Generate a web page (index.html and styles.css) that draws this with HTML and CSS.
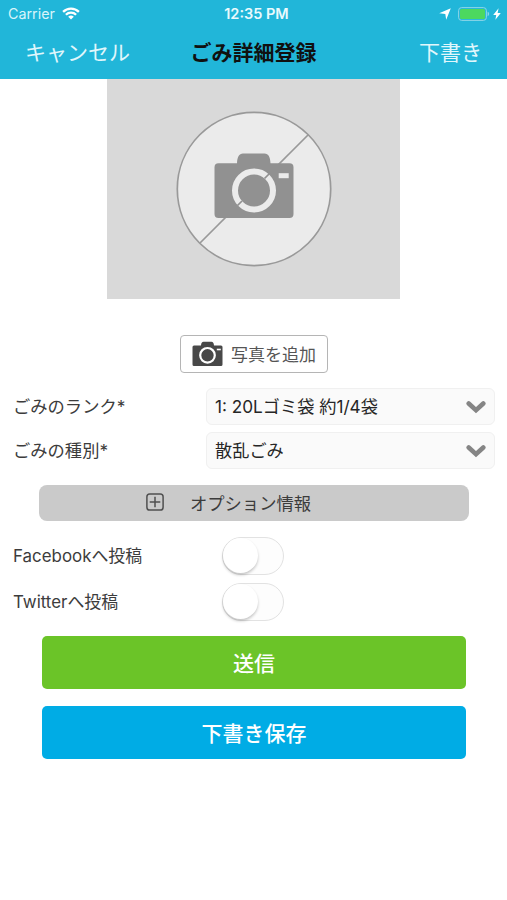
FILE: index.html
```html
<!doctype html>
<html lang="ja">
<head>
    <meta charset="utf-8">
    <meta name="viewport" content="width=device-width, initial-scale=1">
    <title>ごみ詳細登録</title>
    <link rel="stylesheet" href="styles.css">
</head>
<body>
    <header class="header">
        <div class="status">
            <div class="status-left">
                <span class="carrier">Carrier</span>
                <svg class="wifi" width="18" height="13" viewBox="0 0 18 13" fill="none" stroke="#fff" stroke-width="2.3">
                    <path d="M1.1 4.9a11.2 11.2 0 0 1 15.8 0M3.9 7.8a7.2 7.2 0 0 1 10.2 0"/>
                    <path d="M9 12.6L6.2 9.8a4 4 0 0 1 5.6 0z" fill="#fff" stroke="none"/>
                </svg>
            </div>
            <span class="time">12:35 PM</span>
            <div class="status-right">
                <svg width="12" height="12" viewBox="0 0 12 12"><path d="M11.8.2L7.2 11.7 6.3 5.9.2 5.2z" fill="#fff"/></svg>
                <svg class="battery" width="32" height="14" viewBox="0 0 32 14">
                    <rect x=".6" y=".6" width="27.8" height="12.8" rx="3" fill="none" stroke="#8ed6e8"/>
                    <rect x="2" y="2" width="25" height="10" rx="1.5" fill="#4cd85f"/>
                    <path d="M29.6 4.8q1.6.6 1.6 2.2t-1.6 2.2z" fill="#8ed6e8"/>
                </svg>
                <svg width="8" height="12" viewBox="0 0 8 12"><path d="M5.6.2L.2 6.9h3L2.4 11.8 7.8 5H4.6z" fill="#fff"/></svg>
            </div>
        </div>
        <nav class="nav">
            <a class="nav-link">キャンセル</a>
            <h1>ごみ詳細登録</h1>
            <a class="nav-link nav-right">下書き</a>
        </nav>
    </header>
    <main>
        <div class="photo">
            <svg width="156" height="156" viewBox="0 0 156 156">
                <circle cx="78" cy="78" r="76.7" fill="#ebebeb" stroke="#999" stroke-width="1.7"/>
                <path d="M24 132L132 24" stroke="#999" stroke-width="1.7"/>
                <path d="M42.5 52.3H61C61.3 46 63 42.5 67 42.5H88.5C92.5 42.5 94.2 46 94.5 52.3H113.5a4 4 0 0 1 4 4V103a4 4 0 0 1-4 4H42.5a4 4 0 0 1-4-4V56.3a4 4 0 0 1 4-4z" fill="#919191"/>
                <circle cx="78" cy="79.5" r="19" fill="none" stroke="#ebebeb" stroke-width="6"/>
                <path d="M61.5 94.5l4.5-4.5M88.5 67.5l4.5-4.5" stroke="#919191" stroke-width="1.7"/>
                <rect x="102.7" y="62.2" width="10" height="5" fill="#ebebeb"/>
            </svg>
        </div>
        <button class="add-photo" type="button">
            <svg width="31" height="26" viewBox="0 0 31 26">
                <path d="M2 4.5H9C9.2 1.8 10 .7 11.5.7H19.5C21 .7 21.8 1.8 22 4.5H29A1.5 1.5 0 0 1 30.5 6V23.5A1.5 1.5 0 0 1 29 25H2A1.5 1.5 0 0 1 .5 23.5V6A1.5 1.5 0 0 1 2 4.5z" fill="#484848"/>
                <circle cx="15.5" cy="14.3" r="7.3" fill="none" stroke="#fff" stroke-width="2.2"/>
                <path d="M24.8 8.5h4" stroke="#fff" stroke-width="1.6"/>
            </svg>
            <span class="text">写真を追加</span>
        </button>
        <form class="form">
            <div class="field">
                <label class="text">ごみのランク*</label>
                <div class="select">
                    <span class="text value">1: 20Lゴミ袋 約1/4袋</span>
                    <svg class="chevron" width="20" height="14" viewBox="0 0 20 14"><path d="M2.7 3.5l7.3 6.7 7.3-6.7"/></svg>
                </div>
            </div>
            <div class="field">
                <label class="text">ごみの種別*</label>
                <div class="select">
                    <span class="text value">散乱ごみ</span>
                    <svg class="chevron" width="20" height="14" viewBox="0 0 20 14"><path d="M2.7 3.5l7.3 6.7 7.3-6.7"/></svg>
                </div>
            </div>
            <button class="option" type="button">
                <svg class="plus" width="18" height="18" viewBox="0 0 18 18">
                    <rect x=".9" y=".9" width="16.2" height="16.2" rx="2.8"/>
                    <path d="M9 3.7v10.6M3.7 9h10.6"/>
                </svg>
                <span class="text">オプション情報</span>
            </button>
            <div class="share">
                <label class="text">Facebookへ投稿</label>
                <span class="toggle"></span>
            </div>
            <div class="share">
                <label class="text">Twitterへ投稿</label>
                <span class="toggle"></span>
            </div>
            <button class="submit" type="button">送信</button>
            <button class="submit draft" type="button">下書き保存</button>
        </form>
    </main>
</body>
</html>
```
FILE: styles.css
```css
* {
    box-sizing: border-box;
}
body {
    margin: 0;
    background: #fff;
    color: #3c3c3c;
    font-family: Inter, "Noto Sans CJK JP", sans-serif;
    font-size: 17px;
}
button {
    display: flex;
    align-items: center;
    padding: 0;
    font: inherit;
}
svg {
    display: block;
    flex-shrink: 0;
}
.text {
    padding-bottom: 2px;
}
.header {
    height: 79px;
    background: #21b6d9;
    color: #fff;
}
.status {
    display: grid;
    grid-template-columns: 1fr auto 1fr;
    align-items: center;
    height: 27px;
    padding: 0 6px 0 8px;
}
.status-left, .status-right {
    display: flex;
    align-items: center;
}
.carrier {
    font-size: 14.3px;
    color: #d8f4fa;
}
.wifi {
    margin-left: 7px;
}
.time {
    margin-left: 4px;
    font-size: 14.5px;
    font-weight: 600;
    color: #e9fafd;
}
.status-right {
    justify-content: flex-end;
}
.battery {
    margin: 0 3px 0 7px;
}
.nav {
    display: grid;
    grid-template-columns: 1fr auto 1fr;
    align-items: center;
    height: 48px;
    padding: 0 25px;
    font-size: 21px;
}
.nav-link {
    color: #e0f7fc;
}
.nav-right {
    text-align: right;
}
h1 {
    margin: 0;
    font-size: 21px;
    color: #101010;
}
.photo {
    display: flex;
    justify-content: center;
    width: 293px;
    height: 220px;
    margin: 0 auto;
    padding-top: 32px;
    background: #d9d9d9;
}
.add-photo {
    width: 148px;
    height: 38px;
    margin: 36px auto 15px 180px;
    padding-left: 11px;
    gap: 8px;
    border: 1.5px solid #b5b5b5;
    border-radius: 4px;
    background: #fff;
    color: #555;
}
.field {
    display: flex;
    align-items: center;
    height: 37px;
    margin-bottom: 7px;
    padding: 0 12px 0 13px;
}
.field label {
    width: 193px;
    font-size: 17.3px;
}
.select {
    display: flex;
    flex: 1;
    align-items: center;
    justify-content: space-between;
    height: 37px;
    padding: 0 8px;
    border: 1px solid #f0f0f0;
    border-radius: 6px;
    background: #fafafa;
    color: #262626;
}
.value {
    font-size: 17.2px;
}
.chevron {
    fill: none;
    stroke: #858585;
    stroke-width: 4.6;
    stroke-linecap: round;
}
.option {
    width: 430px;
    height: 36px;
    margin: 16px 0 16px 39px;
    padding-left: 107px;
    gap: 26px;
    border: 0;
    border-radius: 8px;
    background: #cacaca;
    color: #3c3c3c;
    font-size: 17.3px;
}
.plus {
    margin-bottom: 2px;
    fill: none;
    stroke: #505050;
    stroke-width: 1.5;
}
.share {
    display: flex;
    align-items: center;
    height: 38px;
    margin-bottom: 7.5px;
    padding-left: 13px;
}
.share label {
    width: 209px;
    padding-bottom: 3px;
    font-size: 16.9px;
}
.toggle {
    width: 62px;
    height: 38px;
    border: 1.5px solid #e2e2e2;
    border-radius: 19px;
    background: #fdfdfd;
}
.toggle::before {
    content: "";
    display: block;
    width: 35px;
    height: 35px;
    border-radius: 50%;
    background: #fff;
    box-shadow: 0 2px 3px rgba(0, 0, 0, .22);
}
.submit {
    justify-content: center;
    width: 424px;
    height: 53.5px;
    margin: 15px 0 0 42px;
    border: 0;
    border-radius: 5px;
    background: #6bc428;
    color: #fff;
    font-size: 21px;
    font-weight: 500;
}
.draft {
    margin-top: 16.5px;
    background: #00ace5;
}
```
